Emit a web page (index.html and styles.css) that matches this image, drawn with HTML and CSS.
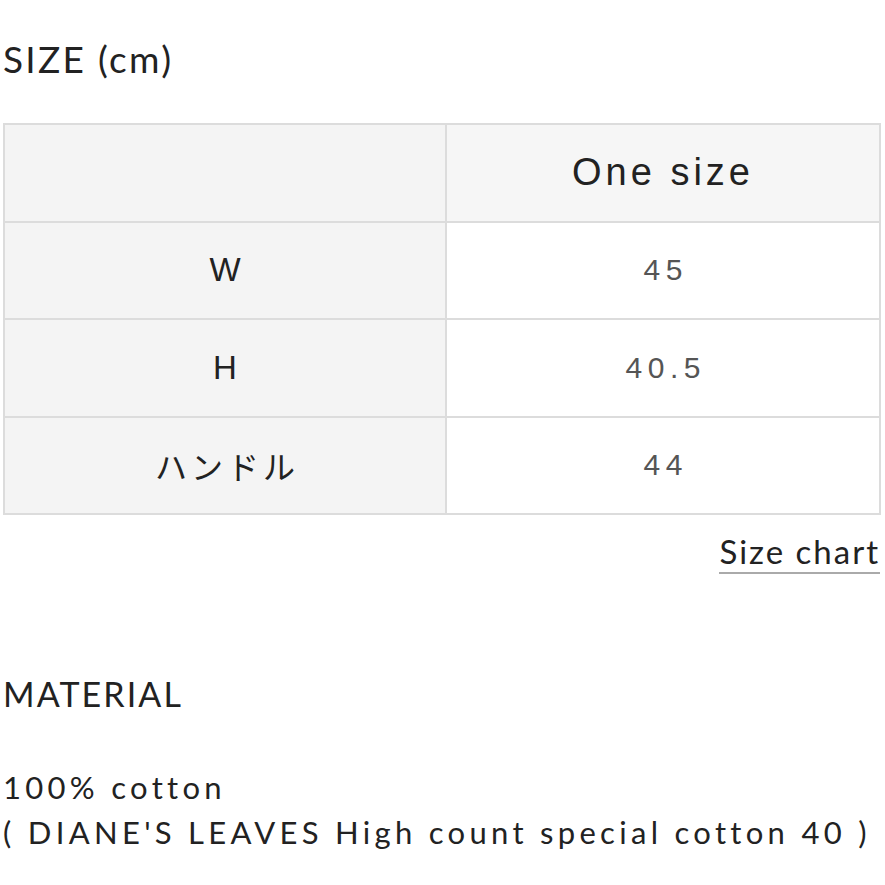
FILE: index.html
```html
<!DOCTYPE html>
<html lang="ja">
<head>
<meta charset="utf-8">
<link rel="stylesheet" href="styles.css">
</head>
<body>
<div class="page">
  <h2 class="heading size-heading">SIZE (cm)</h2>
  <table class="size-table">
    <tr class="head-row">
      <th class="label-cell"></th>
      <th class="value-cell head">One size</th>
    </tr>
    <tr>
      <td class="label-cell">W</td>
      <td class="value-cell">45</td>
    </tr>
    <tr>
      <td class="label-cell">H</td>
      <td class="value-cell">40.5</td>
    </tr>
    <tr>
      <td class="label-cell jp">ハンドル</td>
      <td class="value-cell">44</td>
    </tr>
  </table>
  <div class="chart-row"><a class="chart-link">Size chart</a></div>
  <h2 class="heading material-heading">MATERIAL</h2>
  <p class="material-text">100% cotton<br>( DIANE'S LEAVES High count special cotton 40 )</p>
</div>
</body>
</html>
```
FILE: styles.css
```css
html, body {
  margin: 0;
  padding: 0;
  background: #ffffff;
}
.page {
  width: 885px;
  padding: 0 4px 0 3px;
  box-sizing: border-box;
  font-family: "Lato", "Noto Sans CJK JP", sans-serif;
  color: #222;
}
.heading {
  font-weight: 400;
  margin: 0;
  line-height: 44px;
}
.size-heading {
  padding-top: 37px;
  font-size: 37px;
  letter-spacing: 2.3px;
}
.size-table {
  margin-top: 42px;
  width: 878px;
  border-collapse: collapse;
  table-layout: fixed;
  font-family: "Liberation Sans", "Noto Sans CJK JP", sans-serif;
}
.size-table th, .size-table td {
  border: 2px solid #dcdcdc;
  height: 95.5px;
  padding: 0;
  text-align: center;
  vertical-align: middle;
  font-weight: 400;
}
.label-cell {
  width: 440px;
  background: #f4f4f4;
  color: #222;
  font-size: 33px;
}
.value-cell {
  background: #fff;
  color: #555;
  font-size: 30px;
  letter-spacing: 5.5px;
  text-indent: 5.5px;
}
.value-cell.head {
  background: #f6f6f6;
  color: #222;
  font-size: 38px;
  letter-spacing: 4px;
  text-indent: 0;
}
.jp {
  font-family: "Noto Sans CJK JP", sans-serif;
  font-size: 32px;
  letter-spacing: 4px;
  text-indent: 4px;
}
.chart-row {
  display: flex;
  justify-content: flex-end;
  padding-top: 16px;
}
.chart-link {
  font-size: 33px;
  line-height: 40px;
  letter-spacing: 2px;
  color: #222;
  border-bottom: 2px solid #aaa;
  padding-bottom: 1px;
  margin-right: 1px;
}
.material-heading {
  margin-top: 98px;
  font-size: 34px;
  letter-spacing: 2.1px;
}
.material-text {
  margin: 49px 0 0;
  font-size: 31px;
  line-height: 45px;
  letter-spacing: 4.3px;
}
```
